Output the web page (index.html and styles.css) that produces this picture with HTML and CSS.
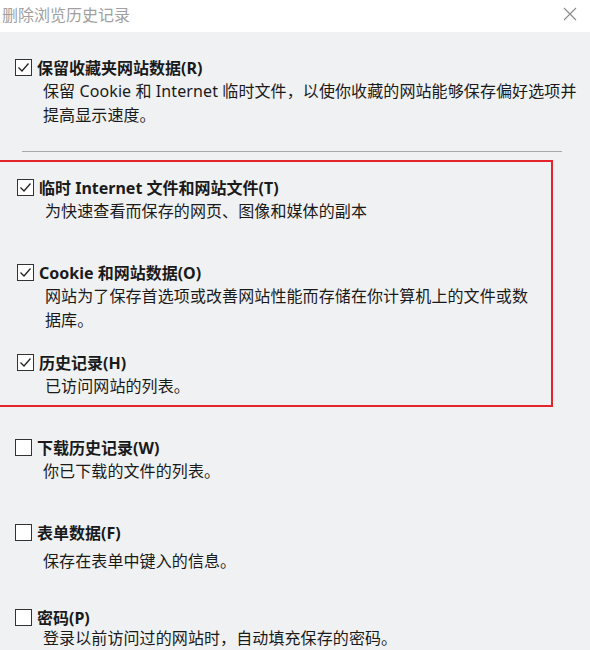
FILE: index.html
```html
<!DOCTYPE html>
<html lang="zh-CN">
<head>
<meta charset="utf-8">
<title>删除浏览历史记录</title>
<link rel="stylesheet" href="styles.css">
</head>
<body>
<div class="dialog">
  <div class="titlebar">
    <span class="title">删除浏览历史记录</span>
    <svg class="close" width="14" height="14" viewBox="0 0 14 14"><path d="M1 1L13 13M13 1L1 13" stroke="#8a8a8a" stroke-width="1.1" fill="none"/></svg>
  </div>
  <div class="content">
    <div class="item first">
      <div class="label"><svg class="cb" width="17" height="17" viewBox="0 0 17 17"><rect x="0.5" y="0.5" width="16" height="16" fill="#fff" stroke="#333"/><path d="M3.5 8.5L7 12L13.5 4.5" stroke="#222" stroke-width="1.3" fill="none"/></svg><span>保留收藏夹网站数据(R)</span></div>
      <div class="desc">保留 Cookie 和 Internet 临时文件，以使你收藏的网站能够保存偏好选项并<br>提高显示速度。</div>
    </div>
    <div class="sep"></div>
    <div class="highlight">
      <div class="item in-first">
        <div class="label"><svg class="cb" width="17" height="17" viewBox="0 0 17 17"><rect x="0.5" y="0.5" width="16" height="16" fill="#fff" stroke="#333"/><path d="M3.5 8.5L7 12L13.5 4.5" stroke="#222" stroke-width="1.3" fill="none"/></svg><span>临时 Internet 文件和网站文件(T)</span></div>
        <div class="desc">为快速查看而保存的网页、图像和媒体的副本</div>
      </div>
      <div class="item gap-lg">
        <div class="label"><svg class="cb" width="17" height="17" viewBox="0 0 17 17"><rect x="0.5" y="0.5" width="16" height="16" fill="#fff" stroke="#333"/><path d="M3.5 8.5L7 12L13.5 4.5" stroke="#222" stroke-width="1.3" fill="none"/></svg><span>Cookie 和网站数据(O)</span></div>
        <div class="desc">网站为了保存首选项或改善网站性能而存储在你计算机上的文件或数<br>据库。</div>
      </div>
      <div class="item gap-sm">
        <div class="label"><svg class="cb" width="17" height="17" viewBox="0 0 17 17"><rect x="0.5" y="0.5" width="16" height="16" fill="#fff" stroke="#333"/><path d="M3.5 8.5L7 12L13.5 4.5" stroke="#222" stroke-width="1.3" fill="none"/></svg><span>历史记录(H)</span></div>
        <div class="desc">已访问网站的列表。</div>
      </div>
    </div>
    <div class="item after-box">
      <div class="label"><svg class="cb" width="17" height="17" viewBox="0 0 17 17"><rect x="0.5" y="0.5" width="16" height="16" fill="#fff" stroke="#333"/></svg><span>下载历史记录(W)</span></div>
      <div class="desc">你已下载的文件的列表。</div>
    </div>
    <div class="item gap-lg">
      <div class="label"><svg class="cb" width="17" height="17" viewBox="0 0 17 17"><rect x="0.5" y="0.5" width="16" height="16" fill="#fff" stroke="#333"/></svg><span>表单数据(F)</span></div>
      <div class="desc spaced">保存在表单中键入的信息。</div>
    </div>
    <div class="item gap-md">
      <div class="label"><svg class="cb" width="17" height="17" viewBox="0 0 17 17"><rect x="0.5" y="0.5" width="16" height="16" fill="#fff" stroke="#333"/></svg><span>密码(P)</span></div>
      <div class="desc tight">登录以前访问过的网站时，自动填充保存的密码。</div>
    </div>
  </div>
</div>
</body>
</html>
```

FILE: styles.css
```css
html, body {
  margin: 0;
  padding: 0;
  background: #f0f1f3;
}
body {
  font-family: "Noto Sans", "Noto Sans CJK SC", sans-serif;
  color: #1a1a1a;
  overflow: hidden;
}
.dialog {
  width: 590px;
  height: 650px;
  overflow: hidden;
}
.titlebar {
  height: 32px;
  background: #ffffff;
  display: flex;
  align-items: center;
  justify-content: space-between;
  padding: 0 13px 4px 2px;
  box-sizing: border-box;
}
.title {
  font-family: "Noto Sans CJK SC", sans-serif;
  font-size: 16px;
  color: #a0a0a0;
  line-height: 20px;
}
.close {
  display: block;
}
.content {
  padding-top: 23px;
}
.item {
  padding-left: 15px;
}
.label {
  display: flex;
  align-items: center;
  height: 24px;
  font-size: 16px;
  font-weight: bold;
  gap: 5px;
}
.cb {
  display: block;
  flex: none;
}
.desc {
  padding-left: 28px;
  font-size: 16px;
  line-height: 24px;
  letter-spacing: 0.1px;
}
.desc.spaced {
  margin-top: 5px;
}
.desc.tight {
  margin-top: -3px;
}
.sep {
  height: 1px;
  background: #a8a8a8;
  margin: 24px 28px 0 22px;
}
.highlight {
  margin-top: 8px;
  margin-left: -3px;
  width: 556px;
  border: 2px solid #e3242b;
  box-sizing: border-box;
  padding: 13px 0 7px 3px;
}
.gap-lg {
  margin-top: 37px;
}
.gap-md {
  margin-top: 32px;
}
.gap-sm {
  margin-top: 18px;
}
.after-box {
  margin-top: 28px;
}
```
